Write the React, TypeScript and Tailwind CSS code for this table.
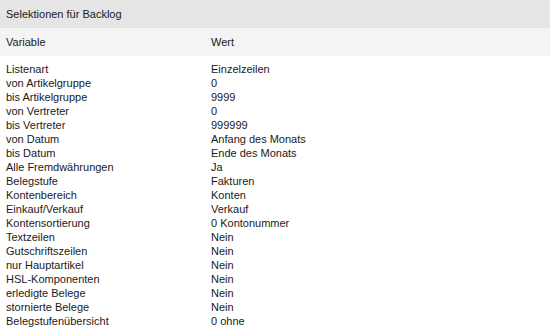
const rows: [string, string][] = [
  ["Listenart", "Einzelzeilen"],
  ["von Artikelgruppe", "0"],
  ["bis Artikelgruppe", "9999"],
  ["von Vertreter", "0"],
  ["bis Vertreter", "999999"],
  ["von Datum", "Anfang des Monats"],
  ["bis Datum", "Ende des Monats"],
  ["Alle Fremdwährungen", "Ja"],
  ["Belegstufe", "Fakturen"],
  ["Kontenbereich", "Konten"],
  ["Einkauf/Verkauf", "Verkauf"],
  ["Kontensortierung", "0 Kontonummer"],
  ["Textzeilen", "Nein"],
  ["Gutschriftszeilen", "Nein"],
  ["nur Hauptartikel", "Nein"],
  ["HSL-Komponenten", "Nein"],
  ["erledigte Belege", "Nein"],
  ["stornierte Belege", "Nein"],
  ["Belegstufenübersicht", "0 ohne"],
];

export default function App() {
  return (
    <div className="w-[550px] h-[329px] bg-white text-[11px] text-[#1a1a1a] font-['Liberation_Sans',Arial,sans-serif] overflow-hidden">
      <div className="h-[28px] leading-[28px] px-[6px] bg-[#e5e5e5]">Selektionen für Backlog</div>
      <div className="flex h-[28px] leading-[28px] bg-[#f4f4f4]">
        <div className="w-[211px] pl-[6px]">Variable</div>
        <div className="flex-1">Wert</div>
      </div>
      <div className="pt-[6px]">
        {rows.map(([name, value]) => (
          <div key={name} className="flex h-[14px] leading-[14px]">
            <div className="w-[211px] pl-[6px]">{name}</div>
            <div className="flex-1">{value}</div>
          </div>
        ))}
      </div>
    </div>
  );
}
